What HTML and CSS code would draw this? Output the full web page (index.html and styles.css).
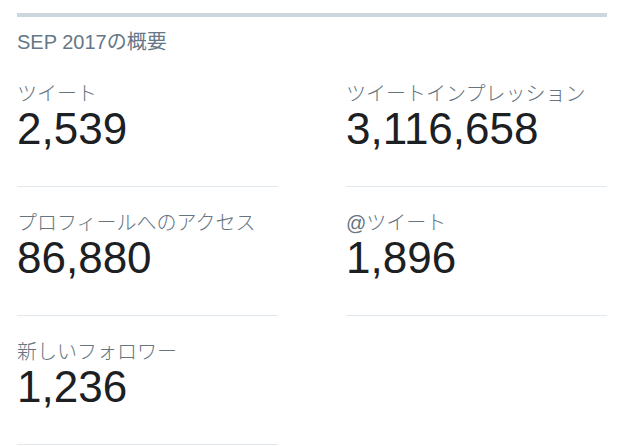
FILE: index.html
```html
<!DOCTYPE html>
<html lang="ja">
<head>
  <meta charset="UTF-8">
  <meta name="viewport" content="width=device-width, initial-scale=1.0">
  <title>SEP 2017の概要</title>
  <link rel="stylesheet" href="styles.css">
</head>
<body>
  <div class="summary">
    <div class="summary-bar"></div>
    <h2 class="summary-title">SEP 2017の概要</h2>
    <div class="stat-grid">
      <div class="stat">
        <div class="stat-label">ツイート</div>
        <div class="stat-value">2,539</div>
      </div>
      <div class="stat">
        <div class="stat-label">ツイートインプレッション</div>
        <div class="stat-value">3,116,658</div>
      </div>
      <div class="stat">
        <div class="stat-label">プロフィールへのアクセス</div>
        <div class="stat-value">86,880</div>
      </div>
      <div class="stat">
        <div class="stat-label">@ツイート</div>
        <div class="stat-value">1,896</div>
      </div>
      <div class="stat">
        <div class="stat-label">新しいフォロワー</div>
        <div class="stat-value">1,236</div>
      </div>
    </div>
  </div>
</body>
</html>
```

FILE: styles.css
```css
body {
  margin: 0;
  background: #fff;
  font-family: "Liberation Sans", "Noto Sans CJK JP", sans-serif;
}
.summary { padding: 13px 33px 0 17px; }
.summary-bar { height: 4px; background: #ccd6dd; }
.summary-title {
  margin: 13px 0 0;
  font-size: 20px; line-height: 24px; font-weight: normal;
  color: #657786;
}
.stat-grid {
  display: grid;
  grid-template-columns: 261px 261px;
  column-gap: 68px;
  margin-top: 4px;
}
.stat {
  padding: 24px 0 33px;
  border-bottom: 1px solid #e1e8ed;
}
.stat-label {
  font-size: 20px; line-height: 24px; font-weight: 300;
  color: #66757f;
}
.stat-value {
  margin-top: -1px;
  font-size: 44px; line-height: 48px;
  color: #1c2022;
}
```
